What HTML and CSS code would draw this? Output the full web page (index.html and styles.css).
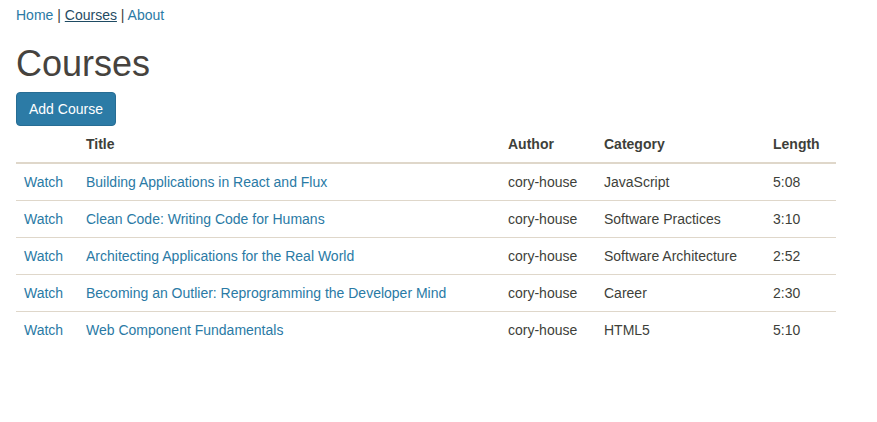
FILE: index.html
```html
<!DOCTYPE html>
<html>
<head>
<meta charset="utf-8">
<link rel="stylesheet" href="styles.css">
</head>
<body>
<div class="page">
  <nav class="nav">
    <a href="#">Home</a> | <a href="#" class="active">Courses</a> | <a href="#">About</a>
  </nav>
  <h1 class="title">Courses</h1>
  <button class="btn">Add Course</button>
  <table class="table">
    <colgroup>
      <col class="c1"><col class="c2"><col class="c3"><col class="c4"><col class="c5">
    </colgroup>
    <thead>
      <tr><th></th><th>Title</th><th>Author</th><th>Category</th><th>Length</th></tr>
    </thead>
    <tbody>
      <tr><td><a href="#">Watch</a></td><td><a href="#">Building Applications in React and Flux</a></td><td>cory-house</td><td>JavaScript</td><td>5:08</td></tr>
      <tr><td><a href="#">Watch</a></td><td><a href="#">Clean Code: Writing Code for Humans</a></td><td>cory-house</td><td>Software Practices</td><td>3:10</td></tr>
      <tr><td><a href="#">Watch</a></td><td><a href="#">Architecting Applications for the Real World</a></td><td>cory-house</td><td>Software Architecture</td><td>2:52</td></tr>
      <tr><td><a href="#">Watch</a></td><td><a href="#">Becoming an Outlier: Reprogramming the Developer Mind</a></td><td>cory-house</td><td>Career</td><td>2:30</td></tr>
      <tr><td><a href="#">Watch</a></td><td><a href="#">Web Component Fundamentals</a></td><td>cory-house</td><td>HTML5</td><td>5:10</td></tr>
    </tbody>
  </table>
</div>
</body>
</html>
```

FILE: styles.css
```css
html, body {
  margin: 0;
  padding: 0;
  background: #fff;
}
body {
  font-family: "Liberation Sans", Arial, sans-serif;
  font-size: 14px;
  line-height: 20px;
  color: #3e3f3a;
}
.page {
  padding: 5px 15px 0 16px;
  width: 820px;
}
a {
  color: #2a7aa5;
  text-decoration: none;
}
.nav {
  line-height: 20px;
}
.nav a.active {
  color: #1f4b63;
  text-decoration: underline;
}
.title {
  font-size: 36px;
  line-height: 39.6px;
  font-weight: 400;
  margin: 19px 0 8px;
  color: #46433e;
}
.btn {
  display: block;
  font-family: inherit;
  font-size: 14px;
  line-height: 20px;
  padding: 6px 12px;
  color: #fff;
  background: #2c7ba6;
  border: 1px solid #276d94;
  border-radius: 4px;
  margin: 0;
}
.table {
  width: 820px;
  border-collapse: collapse;
  border-spacing: 0;
  table-layout: fixed;
}
.c1 { width: 62px; }
.c2 { width: 422px; }
.c3 { width: 96px; }
.c4 { width: 169px; }
.c5 { width: 71px; }
.table th, .table td {
  padding: 8px;
  text-align: left;
  vertical-align: top;
  line-height: 20px;
  white-space: nowrap;
}
.table th {
  font-weight: 700;
  border-bottom: 2px solid #dfd7ca;
}
.table td {
  border-bottom: 1px solid #dfd7ca;
}
.table tbody tr:last-child td {
  border-bottom: none;
}
```
